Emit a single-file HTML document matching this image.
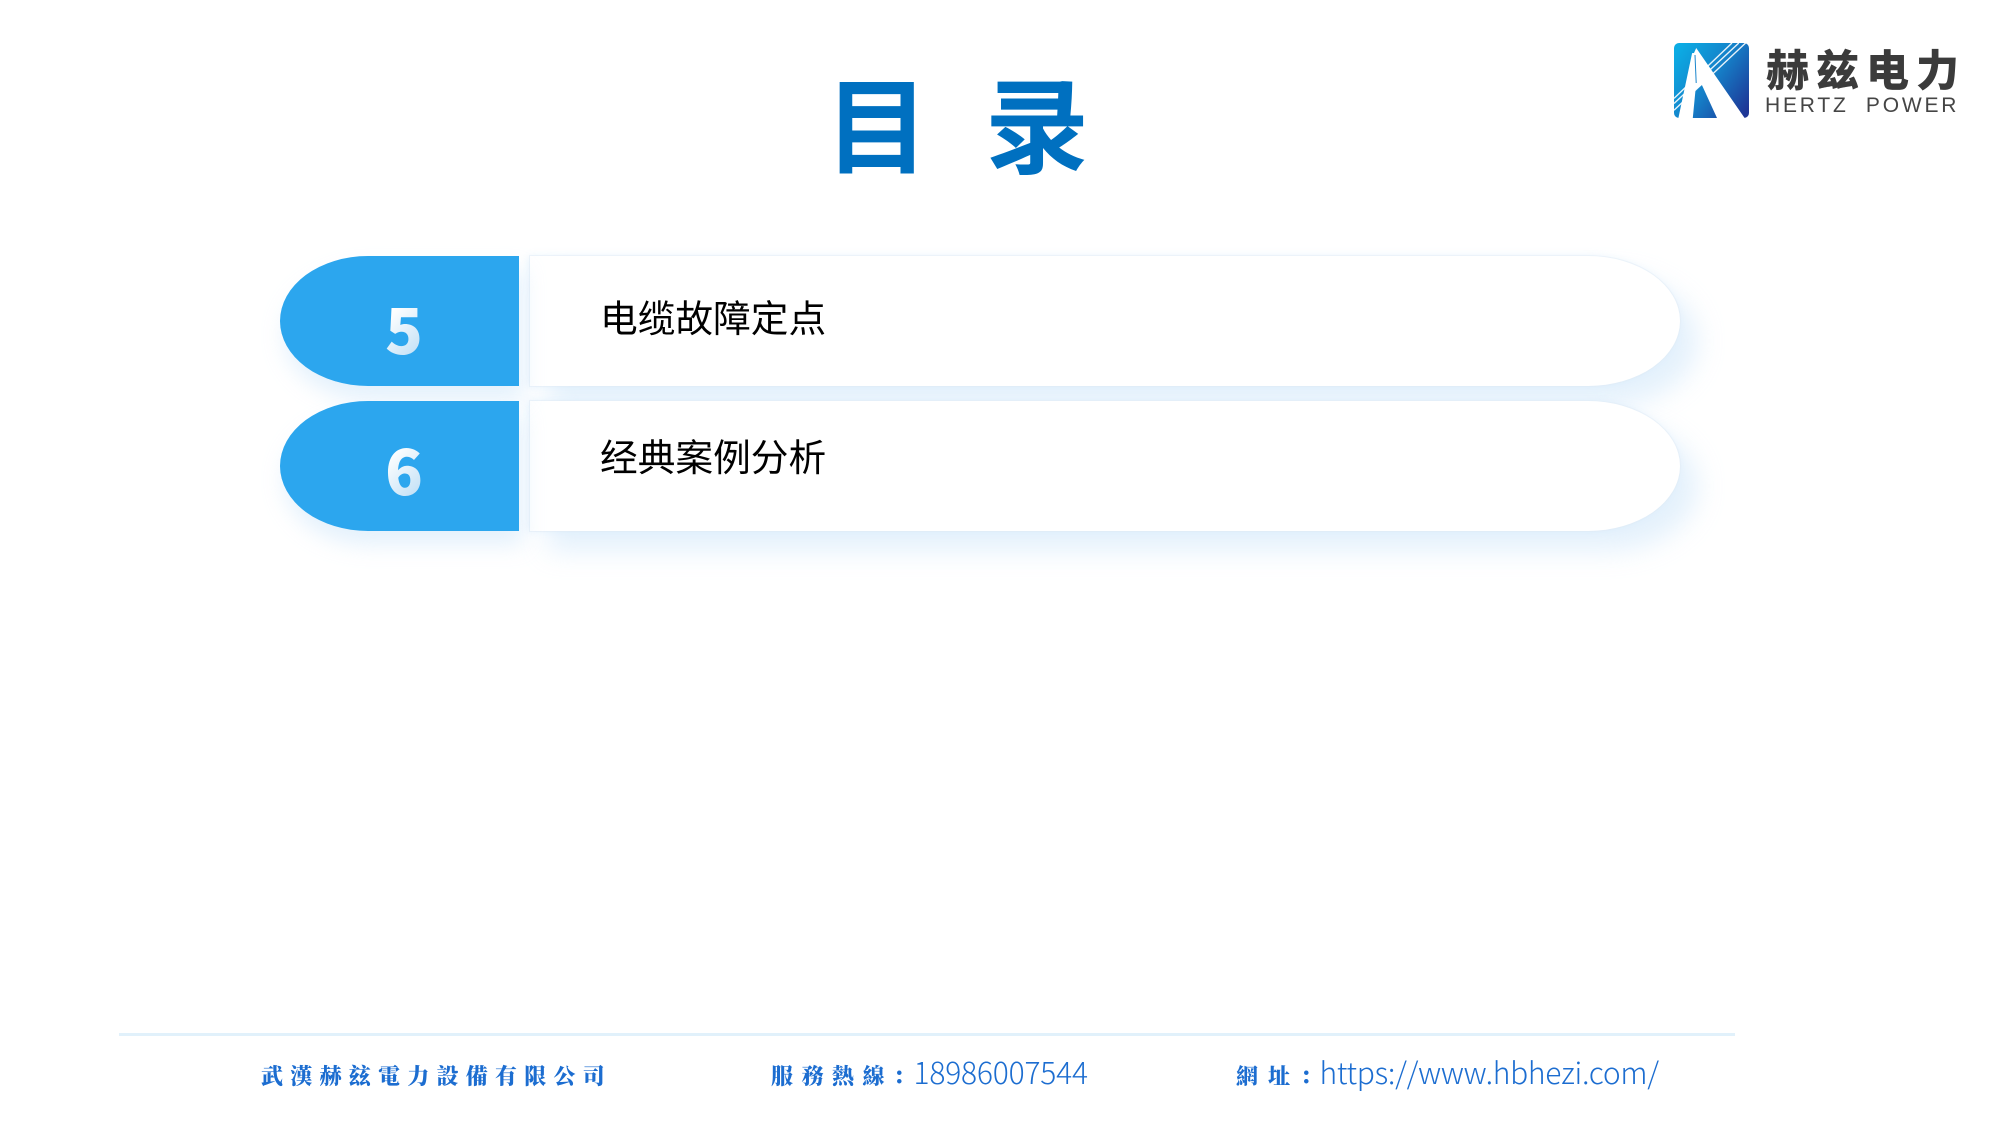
<!DOCTYPE html>
<html lang="zh"><head><meta charset="utf-8"><title>目录</title>
<style>
html,body{margin:0;padding:0;background:#fff;width:2000px;height:1125px;overflow:hidden}
body{position:relative;font-family:"Liberation Sans","Noto Sans CJK SC",sans-serif}
.a{position:absolute;white-space:nowrap}
.white{left:530px;width:1150px;height:130px;background:#fff;border-radius:0 92px 92px 0/0 65px 65px 0;box-shadow:0 0 0 1px rgba(226,236,246,.5),18px 20px 26px rgba(190,222,248,.42),-2px 0 8px rgba(190,222,248,.3)}
.blue{left:280px;width:239px;height:130px;background:#2ca6ee;border-radius:88px 0 0 88px/65px 0 0 65px;box-shadow:4px 14px 22px rgba(190,222,248,.42)}
.item{left:600px;font-size:37.7px;line-height:50px;color:#000}
.num{font-family:"Noto Sans CJK SC",sans-serif;font-weight:900;font-size:62px;line-height:80px;width:60px;text-align:center;left:374px;background:linear-gradient(135deg,#fff 30%,#b5daf4 90%);-webkit-background-clip:text;background-clip:text;color:transparent}
.ft{font-family:"Noto Serif CJK SC",serif;font-weight:900;color:#1c6dd0;font-size:22px;line-height:30px}
.thin{font-family:"Noto Sans CJK SC","Liberation Sans",sans-serif;font-weight:300;color:#1c6dd0;font-size:30px;line-height:36px}
</style></head><body>
<div class="a" style="left:825px;top:50px;font-family:'Noto Sans CJK SC',sans-serif;font-weight:700;font-size:104px;line-height:140px;letter-spacing:56px;color:#0070c0">目录</div>

<svg class="a" style="left:1673px;top:41px" width="78" height="79" viewBox="0 0 78 79">
<defs><linearGradient id="g" x1="0" y1="0.15" x2="1" y2="0.85"><stop offset="0" stop-color="#0cace4"/><stop offset=".5" stop-color="#1580c8"/><stop offset="1" stop-color="#1e3696"/></linearGradient></defs>
<rect x="1" y="2" width="75" height="75" rx="5" fill="url(#g)"/>
<path d="M1 57.4 L59 2 M1 62.5 L65.8 2 M1 69.2 L72.6 2" stroke="#fff" stroke-width="1.4" fill="none" opacity=".9"/>
<path d="M19.1 12.1 L5.4 77 L19.8 77 L22.5 49 L28.9 44 L44 77 L71.6 77 L23.2 7 L21 12 Z" fill="#fff"/>
<path d="M22 14 L23.2 42" stroke="#1a86cc" stroke-width="1" fill="none"/>
</svg>
<div class="a" style="left:1766px;top:38px;font-family:'Noto Sans CJK SC',sans-serif;font-weight:900;font-size:43px;line-height:60px;letter-spacing:7px;color:#3b3b3b">赫兹电力</div>
<div class="a" style="left:1765px;top:94px;font-size:21px;line-height:24px;letter-spacing:2.8px;color:#454545">HERTZ&nbsp; POWER</div>

<div class="a white" style="top:256px"></div>
<div class="a white" style="top:401px"></div>
<div class="a blue" style="top:256px"></div>
<div class="a blue" style="top:401px"></div>
<div class="a num" style="top:287px">5</div>
<div class="a num" style="top:428px">6</div>
<div class="a item" style="top:294px">电缆故障定点</div>
<div class="a item" style="top:433px">经典案例分析</div>

<div class="a" style="left:119px;top:1033px;width:1616px;height:3px;background:#e1f1fb"></div>
<div class="a ft" style="left:261px;top:1061px;letter-spacing:7.25px">武漢赫玆電力設備有限公司</div>
<div class="a ft" style="left:771px;top:1061px;letter-spacing:8.5px">服務熱線：</div>
<div class="a thin" style="left:913.5px;top:1052.5px;letter-spacing:-.2px">18986007544</div>
<div class="a ft" style="left:1236px;top:1061px;letter-spacing:10px">網址：</div>
<div class="a thin" style="left:1319.5px;top:1052.5px;letter-spacing:-.29px">https://www.hbhezi.com/</div>
</body></html>
